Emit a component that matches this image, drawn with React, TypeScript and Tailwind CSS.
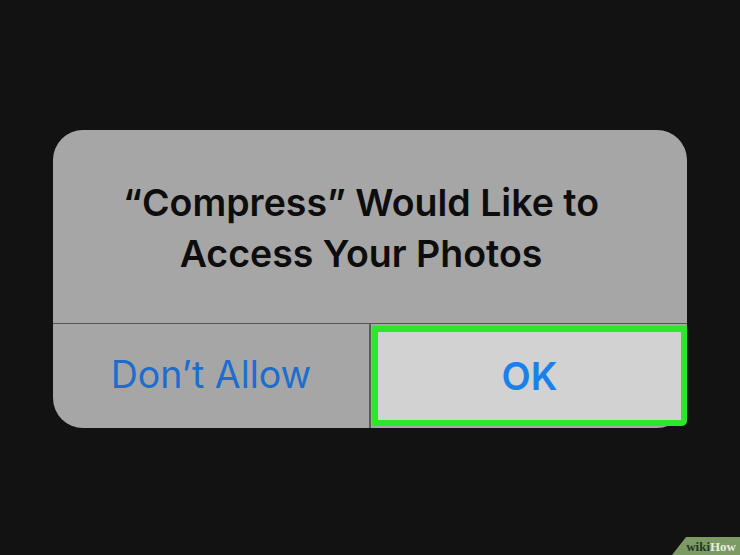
export default function App() {
  return (
    <div className="relative h-[555px] w-[740px] overflow-hidden bg-[#121212] pl-[53px] pt-[130px] font-['Inter',Arial,sans-serif]">
      <div className="flex w-[634px] flex-col rounded-[30px] bg-[#a6a6a6]">
        <div className="flex h-[193px] flex-col items-center justify-center pt-[2px] pr-[18px] text-center text-[37.5px] font-semibold leading-[51px] text-[#0d0d0d]">
          <div>“Compress” Would Like to</div>
          <div>Access Your Photos</div>
        </div>
        <div className="h-[1px] bg-[#555555]" />
        <div className="flex h-[104px]">
          <div className="flex w-[316px] items-center justify-center pb-[2px] text-[37.5px] text-[#1d6dd0]">
            Don’t Allow
          </div>
          <div className="w-[2px] bg-[#5a5a5a]" />
          <div className="flex flex-1 pl-[1px] pt-[2px] pb-[2px]">
            <div className="flex flex-1 items-center justify-center rounded-br-[5px] border-[6px] border-[#2be62b] bg-[#d2d2d2] text-[38px] font-semibold text-[#1a80ea]">
              OK
            </div>
          </div>
        </div>
      </div>
      <div className="absolute bottom-0 right-0 flex h-[18px] w-[68px] items-center justify-end pr-[4px] [clip-path:polygon(14px_0,100%_0,100%_100%,0_100%)] bg-[#7c9a64] font-['Liberation_Serif',serif] text-[13px] font-bold leading-none">
        <span className="text-[#2a3522]">wiki</span>
        <span className="text-[#e6ecdf]">How</span>
      </div>
    </div>
  );
}
